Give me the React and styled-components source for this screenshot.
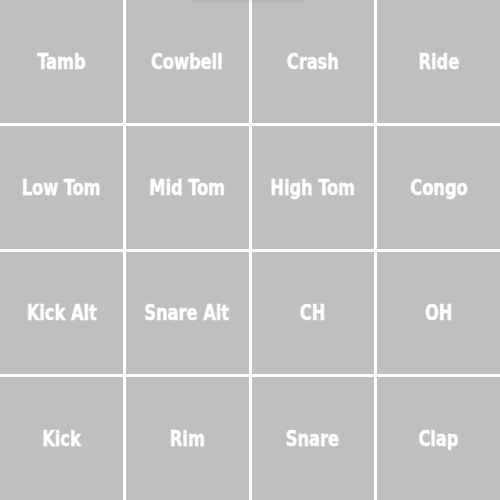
import React from "react";
import styled, { createGlobalStyle } from "styled-components";

const pads = [
  "Tamb", "Cowbell", "Crash", "Ride",
  "Low Tom", "Mid Tom", "High Tom", "Congo",
  "Kick Alt", "Snare Alt", "CH", "OH",
  "Kick", "Rim", "Snare", "Clap",
];

const GlobalStyle = createGlobalStyle`
  html, body {
    margin: 0;
    padding: 0;
    background: #ffffff;
  }
`;

const Board = styled.div`
  position: relative;
  display: grid;
  grid-template-columns: repeat(4, 1fr);
  grid-template-rows: repeat(4, 1fr);
  gap: 3px;
  width: 500px;
  height: 500px;
  background: #ffffff;
`;

const Pad = styled.div`
  display: flex;
  align-items: center;
  justify-content: center;
  background: #bfbfbf;
  user-select: none;
`;

// condensed display face isn't installed, so squeeze the bold sans
const Label = styled.span`
  display: inline-block;
  color: #ffffff;
  font-family: "DejaVu Sans Condensed", "DejaVu Sans", sans-serif;
  font-stretch: condensed;
  font-weight: 700;
  font-size: 22px;
  white-space: nowrap;
  -webkit-text-stroke: 0.4px #ffffff;
  transform: scaleX(0.82);
`;

const TopShade = styled.div`
  position: absolute;
  top: 0;
  left: 192px;
  width: 111px;
  height: 3px;
  background: rgba(0, 0, 0, 0.04);
`;

function App() {
  return (
    <>
      <GlobalStyle />
      <Board>
        {pads.map((name) => (
          <Pad key={name}>
            <Label>{name}</Label>
          </Pad>
        ))}
        <TopShade />
      </Board>
    </>
  );
}

export default App;
